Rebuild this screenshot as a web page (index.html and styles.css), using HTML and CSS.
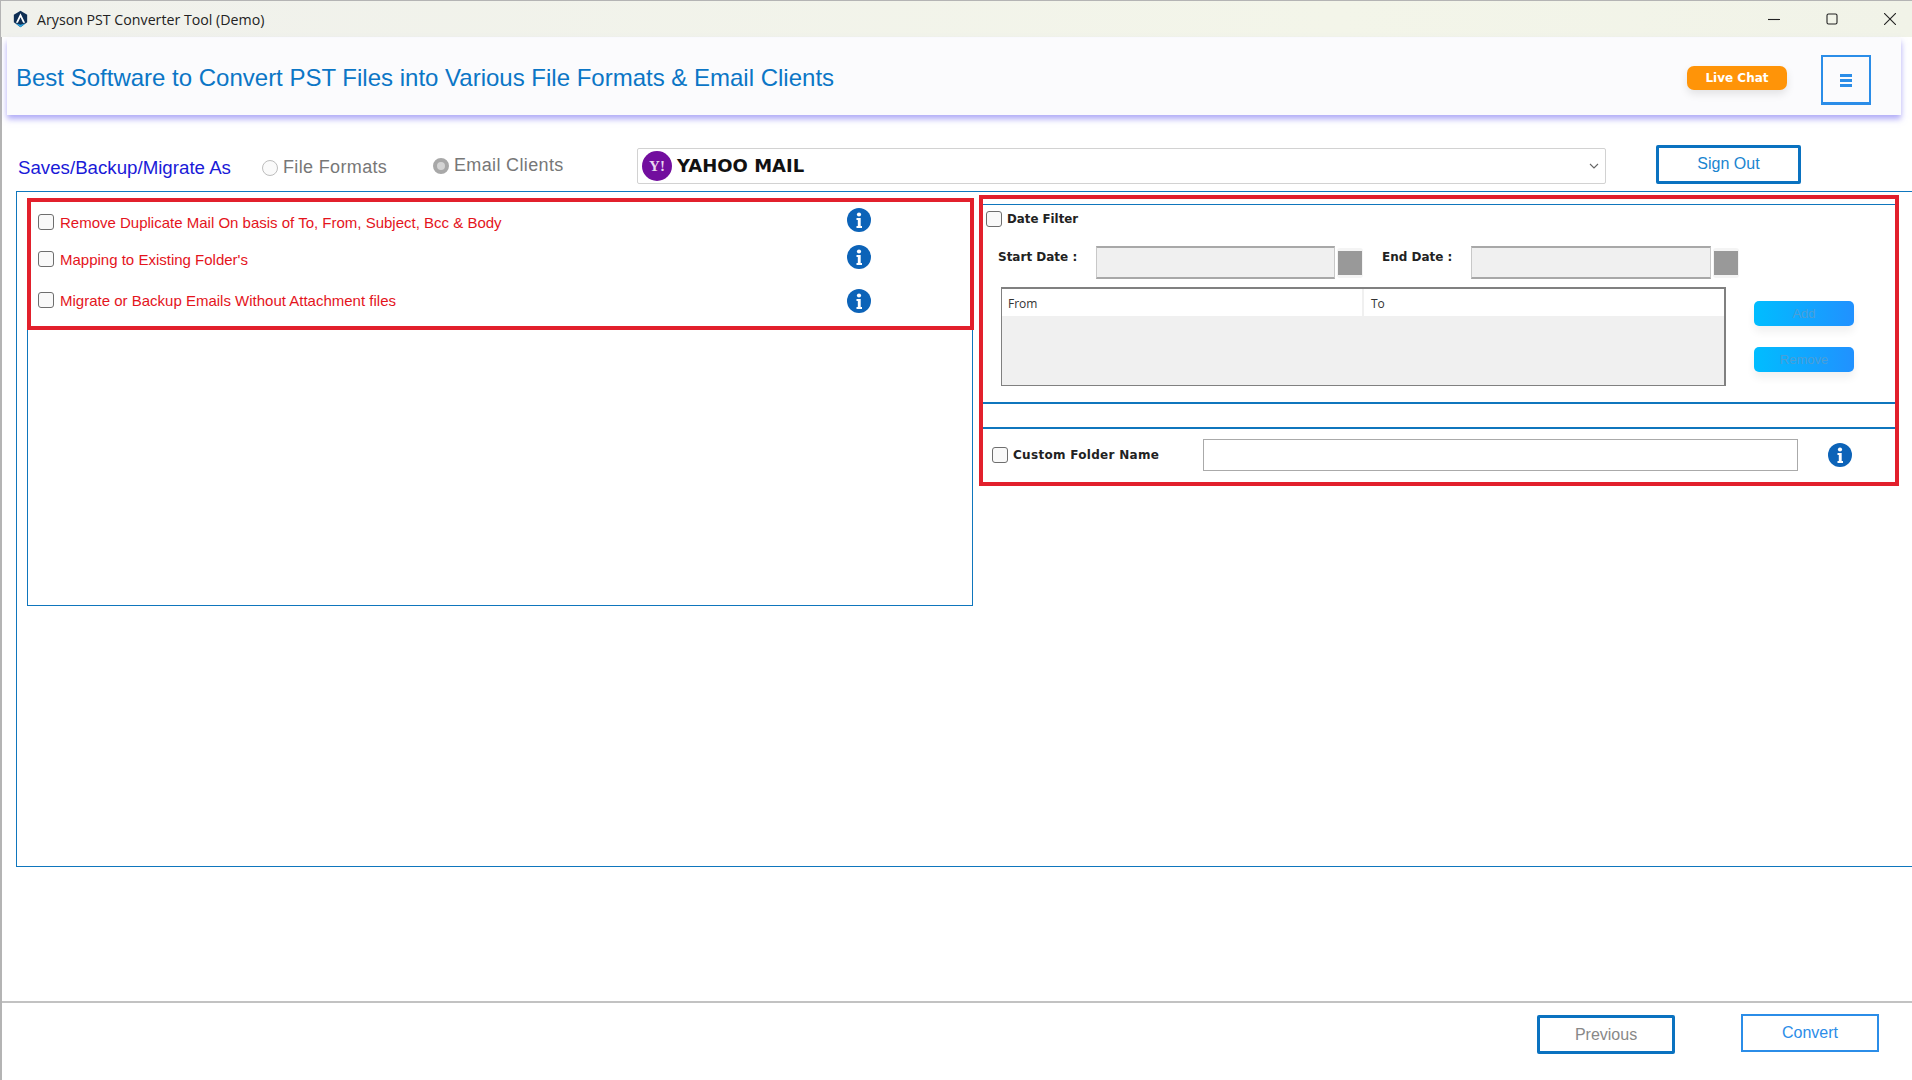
FILE: index.html
```html
<!DOCTYPE html>
<html lang="en">
<head>
<meta charset="UTF-8" />
<title>Aryson PST Converter Tool (Demo)</title>
<link rel="stylesheet" href="styles.css">
</head>
<body>
  <div class="window">
    <div class="titlebar">
      <svg class="app-icon" viewBox="0 0 18 20" aria-hidden="true">
        <path d="M9 0l8 5v9l-8 6-8-6V5z" fill="#0f2f55"/>
        <path d="M3 15l6 5 6-5-6 2z" fill="#2aa3e0"/>
        <path d="M9 3L3.5 14.5h2.4L9 8l3.1 6.5h2.4z" fill="#fff"/>
      </svg>
      <span class="app-name">Aryson PST Converter Tool (Demo)</span>
      <div class="win-controls">
        <svg viewBox="0 0 12 12" aria-hidden="true"><path d="M0 6.5h12" /></svg>
        <svg viewBox="0 0 12 12" aria-hidden="true"><rect x="1" y="1" width="10" height="10" rx="1.5" /></svg>
        <svg viewBox="0 0 12 12" aria-hidden="true"><path d="M0 0l12 12M12 0L0 12" /></svg>
      </div>
    </div>

    <header class="header">
      <h1>Best Software to Convert PST Files into Various File Formats &amp; Email Clients</h1>
      <button class="live-chat" type="button">Live Chat</button>
      <button class="menu-btn" type="button" aria-label="Menu"><span></span><span></span><span></span></button>
    </header>

    <div class="toolbar">
      <span class="saves-label">Saves/Backup/Migrate As</span>
      <label class="radio radio-file"><input type="radio" name="saveas" />File Formats</label>
      <label class="radio radio-email"><input type="radio" name="saveas" checked />Email Clients</label>
      <div class="select-box">
        <span class="yahoo-logo">Y!</span>
        <span class="select-text">YAHOO MAIL</span>
        <svg class="chevron" viewBox="0 0 10 6" aria-hidden="true"><path d="M1 1l4 4 4-4" /></svg>
      </div>
      <button class="btn-outline sign-out" type="button">Sign Out</button>
    </div>

    <main class="panel">
      <section class="left-panel">
        <div class="red-box options">
          <div class="option">
            <label><input type="checkbox" />Remove Duplicate Mail On basis of To, From, Subject, Bcc &amp; Body</label>
            <svg class="info" viewBox="0 0 24 24" aria-hidden="true"><circle cx="12" cy="12" r="12" /><circle class="dot" cx="12" cy="6.5" r="2.1" /><path class="dot" d="M9.5 10h4.2v8h1.3v2H9.5v-2h1.3v-6H9.5z" /></svg>
          </div>
          <div class="option">
            <label><input type="checkbox" />Mapping to Existing Folder's</label>
            <svg class="info" viewBox="0 0 24 24" aria-hidden="true"><circle cx="12" cy="12" r="12" /><circle class="dot" cx="12" cy="6.5" r="2.1" /><path class="dot" d="M9.5 10h4.2v8h1.3v2H9.5v-2h1.3v-6H9.5z" /></svg>
          </div>
          <div class="option">
            <label><input type="checkbox" />Migrate or Backup Emails Without Attachment files</label>
            <svg class="info" viewBox="0 0 24 24" aria-hidden="true"><circle cx="12" cy="12" r="12" /><circle class="dot" cx="12" cy="6.5" r="2.1" /><path class="dot" d="M9.5 10h4.2v8h1.3v2H9.5v-2h1.3v-6H9.5z" /></svg>
          </div>
        </div>
      </section>

      <section class="red-box right-panel">
        <div class="date-block">
          <label class="bold-check"><input type="checkbox" />Date Filter</label>
          <div class="date-row">
            <span class="date-label start">Start Date :</span>
            <div class="date-input"></div>
            <div class="date-btn"></div>
            <span class="date-label end">End Date :</span>
            <div class="date-input wide"></div>
            <div class="date-btn"></div>
          </div>
          <div class="filter-row">
            <div class="filter-table">
              <div class="filter-head"><span>From</span><span>To</span></div>
            </div>
            <div class="filter-actions">
              <button class="btn-blue" type="button">Add</button>
              <button class="btn-blue" type="button">Remove</button>
            </div>
          </div>
        </div>
        <div class="spacer-block"></div>
        <div class="custom-row">
          <label class="bold-check custom"><input type="checkbox" />Custom Folder Name</label>
          <div class="custom-input"></div>
          <svg class="info" viewBox="0 0 24 24" aria-hidden="true"><circle cx="12" cy="12" r="12" /><circle class="dot" cx="12" cy="6.5" r="2.1" /><path class="dot" d="M9.5 10h4.2v8h1.3v2H9.5v-2h1.3v-6H9.5z" /></svg>
        </div>
      </section>
    </main>

    <footer class="footer">
      <button class="btn-outline previous" type="button">Previous</button>
      <button class="btn-outline convert" type="button">Convert</button>
    </footer>
  </div>
</body>
</html>
```

FILE: styles.css
```css
* {margin: 0; padding: 0; box-sizing: border-box;}
html, body {
  width: 1912px;
  height: 1080px;
  overflow: hidden;
  background: #fff;
}
body {
  font-family: "Liberation Sans", Arial, sans-serif;
}
button {
  font-family: inherit;
  background: none;
  border: none;
}
input[type="checkbox"] {
  appearance: none;
  flex: none;
  width: 16px;
  height: 16px;
  border: 1px solid #6e6e6e;
  border-radius: 3px;
  background: #f9f9f9;
}
input[type="radio"] {
  appearance: none;
  flex: none;
  width: 16px;
  height: 16px;
  border: 1px solid #bdbdbd;
  border-radius: 50%;
  background: #fafafa;
}
input[type="radio"]:checked {
  border: 4px solid #a8a8a8;
  background: #d4d4d4;
}

.window {
  height: 1080px;
  border-left: 2px solid #b4b4b4;
  border-top: 1px solid #b4b4b4;
  display: flex;
  flex-direction: column;
}

/* title bar */
.titlebar {
  height: 36px;
  margin-left: -1px;
  padding-left: 12px;
  display: flex;
  align-items: center;
  background: linear-gradient(90deg, #f0f1ec, #f3f5e9 70%, #f1f3e8);
}
.app-icon {
  width: 15px;
  height: 18px;
}
.app-name {
  margin-left: 9px;
  font-family: "Open Sans", sans-serif;
  font-size: 14.2px;
  color: #222;
}
.win-controls {
  margin-left: auto;
  margin-right: 16px;
  display: flex;
  gap: 46px;
}
.win-controls svg {
  width: 12px;
  height: 12px;
  fill: none;
  stroke: #222;
  stroke-width: 1.1;
}

/* blue header */
.header {
  height: 77px;
  margin: 1px 11px 0 5px;
  padding: 2px 30px 0 9px;
  display: flex;
  align-items: center;
  background: #fbfbfd;
  box-shadow: 0 4px 6px rgba(110, 100, 240, 0.55);
}
.header h1 {
  font-weight: 400;
  font-size: 24px;
  color: #0b76c6;
}
.live-chat {
  margin-left: auto;
  width: 100px;
  height: 24px;
  border-radius: 7px;
  background: #ff9408;
  color: #fff;
  font-family: "DejaVu Sans", sans-serif;
  font-weight: 700;
  font-size: 12px;
  box-shadow: 0 4px 8px rgba(0, 0, 0, 0.1);
}
.menu-btn {
  margin-left: 34px;
  margin-top: 4px;
  width: 50px;
  height: 50px;
  padding-top: 3px;
  border: 2px solid #2b8de8;
  border-bottom-width: 3px;
  display: flex;
  flex-direction: column;
  align-items: center;
  justify-content: center;
  gap: 2px;
}
.menu-btn span {
  width: 12px;
  height: 3px;
  background: #2b8de8;
}

/* format row */
.toolbar {
  height: 76px;
  padding: 25px 0 0 16px;
  display: flex;
  align-items: center;
}
.saves-label {
  font-size: 18.7px;
  color: #1a1ad8;
  padding-top: 4px;
  width: 244px;
}
.radio {
  display: flex;
  align-items: center;
  gap: 5px;
  padding-top: 4px;
  font-size: 18px;
  letter-spacing: 0.35px;
  color: #777;
}
.radio-file {
  width: 171px;
}
.radio-email {
  width: 204px;
  padding-top: 0;
}
.select-box {
  width: 969px;
  height: 36px;
  padding: 0 6px 0 4px;
  border: 1px solid #d2d2d2;
  border-radius: 2px;
  display: flex;
  align-items: center;
}
.yahoo-logo {
  width: 30px;
  height: 30px;
  border-radius: 50%;
  background: #720e9e;
  color: #e8d8f0;
  font-family: "Liberation Serif", serif;
  font-weight: 700;
  font-size: 15px;
  line-height: 30px;
  text-align: center;
}
.select-text {
  margin-left: 5px;
  font-family: "DejaVu Sans", sans-serif;
  font-weight: 700;
  font-size: 18px;
  color: #111;
}
.chevron {
  margin-left: auto;
  width: 10px;
  height: 6px;
  fill: none;
  stroke: #666;
  stroke-width: 1.1;
}
.btn-outline {
  font-size: 16px;
  background: #fff;
}
.sign-out {
  margin-left: 50px;
  margin-top: -3px;
  width: 145px;
  height: 39px;
  border: 3px solid #0a72c0;
  border-radius: 2px;
  color: #1a85d0;
}

/* main box */
.panel {
  height: 676px;
  margin-left: 14px;
  padding: 3px 13px 0 10px;
  border: 1px solid #0f76bd;
  border-right: none;
  display: flex;
  align-items: flex-start;
  gap: 5px;
}
.red-box {
  border: 4px solid #e2202c;
}
.left-panel {
  width: 947px;
  height: 408px;
  margin-top: 3px;
  border: 1px solid #0f76bd;
  margin-right: 1px;
}
.options {
  height: 132px;
  margin: -1px -2px 0 -1px;
  padding: 8px 0 0 7px;
  display: flex;
  flex-direction: column;
}
.option {
  padding-right: 99px;
  display: flex;
  align-items: center;
  justify-content: space-between;
  height: 24px;
}
.option + .option {
  margin-top: 13px;
}
.option:last-child {
  margin-top: 17px;
}
.option label {
  display: flex;
  align-items: center;
  gap: 6px;
  font-size: 15px;
  color: #e4141c;
}
.info {
  flex: none;
  width: 24px;
  height: 24px;
  fill: #0c63b8;
}
.option .info {
  margin-top: -4px;
}
.option:last-child .info {
  margin-top: 2px;
}
.info .dot {
  fill: #fff;
}

/* date filter side */
.right-panel {
  width: 921px;
  height: 291px;
  padding-top: 5px;
  display: flex;
  flex-direction: column;
}
.date-block {
  height: 200px;
  padding: 6px 0 0 3px;
  border-top: 1px solid #0f76bd;
  border-bottom: 2px solid #0f76bd;
}
.bold-check {
  display: flex;
  align-items: center;
  gap: 5px;
  font-family: "DejaVu Sans", sans-serif;
  font-weight: 700;
  font-size: 11.8px;
  color: #222;
}
.date-row {
  margin-top: 19px;
  height: 33px;
  display: flex;
  align-items: center;
  font-size: 0;
}
.date-label {
  font-family: "DejaVu Sans", sans-serif;
  font-weight: 700;
  font-size: 12px;
  color: #222;
  padding-bottom: 12px;
}
.date-label.start {
  margin-left: 12px;
  width: 98px;
}
.date-label.end {
  margin-left: 19px;
  width: 89px;
}
.date-input {
  width: 239px;
  height: 33px;
  background: #f0f0f0;
  border: 1px solid #c8c8c8;
  border-top: 2px solid #a8a8a8;
  border-bottom: 2px solid #a8a8a8;
}
.date-input.wide {
  width: 240px;
}
.date-btn {
  width: 26px;
  height: 30px;
  margin-left: 2px;
  background: #999;
  background-clip: padding-box;
  border: solid #f4f4f4;
  border-width: 3px 1px;
  border-radius: 3px;
}
.filter-row {
  margin-top: 8px;
  display: flex;
  align-items: flex-start;
}
.filter-table {
  margin-left: 15px;
  width: 725px;
  height: 99px;
  background: #f0f0f0;
  border: 2px solid #808080;
  border-left-width: 1px;
  border-bottom-width: 1px;
}
.filter-head {
  height: 27px;
  background: #fff;
  display: grid;
  grid-template-columns: 360px 1fr;
  font-family: "Open Sans", sans-serif;
  font-size: 12px;
  line-height: 29px;
  color: #333;
}
.filter-head span {
  padding-left: 6px;
}
.filter-head span + span {
  border-left: 2px solid #f0f0f0;
  padding-left: 7px;
}
.filter-actions {
  margin: 14px 0 0 28px;
  display: flex;
  flex-direction: column;
  gap: 21px;
}
.btn-blue {
  width: 100px;
  height: 25px;
  border-radius: 5px;
  background: linear-gradient(90deg, #00bdff, #2191ff);
  color: #4a9fd8;
  font-size: 13px;
  box-shadow: 0 6px 8px rgba(0, 0, 0, 0.06);
}
.spacer-block {
  height: 25px;
  border-bottom: 2px solid #0f76bd;
}
.custom-row {
  flex: 1;
  display: flex;
  align-items: center;
  padding: 0 0 2px 9px;
}
.bold-check.custom {
  font-size: 12px;
  letter-spacing: 0.3px;
  width: 211px;
}
.custom-input {
  width: 595px;
  height: 32px;
  border: 1px solid #aaa;
  background: #fff;
}
.custom-row .info {
  margin-left: 30px;
}

/* bottom */
.footer {
  margin-top: 134px;
  flex: 1;
  border-top: 2px solid #c2c2c2;
  display: flex;
  align-items: flex-start;
  padding-top: 11px;
}
.previous {
  margin-left: 1535px;
  margin-top: 1px;
  width: 138px;
  height: 39px;
  border: 3px solid #0a72c0;
  border-radius: 2px;
  color: #888;
}
.convert {
  margin-left: 66px;
  width: 138px;
  height: 38px;
  border: 2px solid #2b8de8;
  color: #2b8de8;
}
```
